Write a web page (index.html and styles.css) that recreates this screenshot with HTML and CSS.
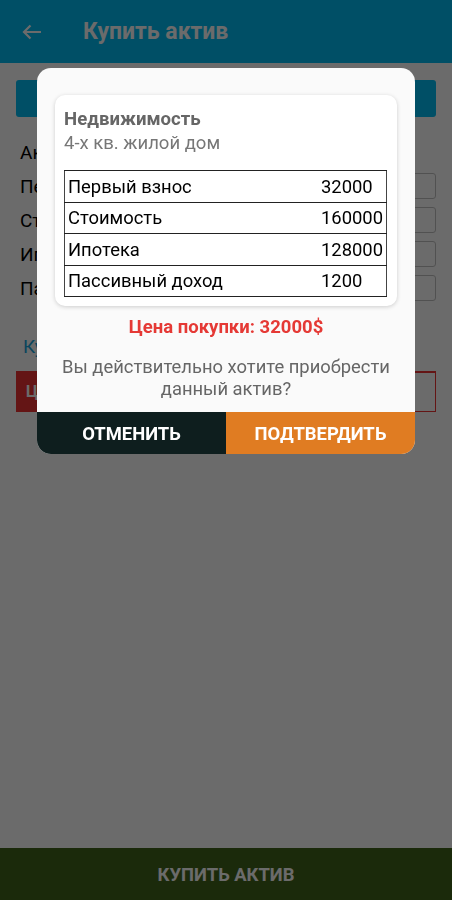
FILE: index.html
```html
<!DOCTYPE html>
<html lang="ru">

<head>
    <meta charset="UTF-8">
    <meta name="viewport" content="width=device-width, initial-scale=1.0">
    <title>Купить актив</title>
    <link rel="stylesheet" href="styles.css">
</head>

<body>
    <div class="page">
        <!-- верхняя панель -->
        <header class="topbar">
            <svg class="back" width="20" height="16" viewBox="0 0 20 16">
                <path d="M19 8H2M8.5 1.5L2 8l6.5 6.5" fill="none" stroke="#fff" stroke-width="2.2"/>
            </svg>
            <h1>Купить актив</h1>
        </header>

        <main class="content">
            <div class="pick">ВЫБРАТЬ АКТИВ</div>
            <div class="field"><span>Актив: Недвижимость</span></div>
            <div class="field"><span>Первый взнос</span><span class="box"></span></div>
            <div class="field"><span>Стоимость</span><span class="box"></span></div>
            <div class="field"><span>Ипотека</span><span class="box"></span></div>
            <div class="field"><span>Пассивный доход</span><span class="box"></span></div>
            <div class="link">Купить в кредит</div>
            <div class="price-row">
                <div class="price-tag">ЦЕНА</div>
                <div class="price-box"></div>
            </div>
        </main>

        <footer class="buy-bar">КУПИТЬ АКТИВ</footer>
    </div>

    <!-- диалог подтверждения -->
    <div class="overlay">
        <div class="dialog">
            <div class="card">
                <div class="card-title">Недвижимость</div>
                <div class="card-sub">4-х кв. жилой дом</div>
                <table class="info">
                    <tr>
                        <td>Первый взнос</td>
                        <td class="val">32000</td>
                    </tr>
                    <tr>
                        <td>Стоимость</td>
                        <td class="val">160000</td>
                    </tr>
                    <tr>
                        <td>Ипотека</td>
                        <td class="val">128000</td>
                    </tr>
                    <tr>
                        <td>Пассивный доход</td>
                        <td class="val">1200</td>
                    </tr>
                </table>
            </div>
            <div class="price">Цена покупки: 32000$</div>
            <div class="question">Вы действительно хотите приобрести данный актив?</div>
            <div class="actions">
                <button class="btn-cancel">ОТМЕНИТЬ</button>
                <button class="btn-ok">ПОДТВЕРДИТЬ</button>
            </div>
        </div>
    </div>
</body>

</html>
```

FILE: styles.css
```css
body {
    margin: 0;
    font-family: Roboto, "Noto Sans", sans-serif;
    background-color: #fff;
}

.page {
    display: flex;
    flex-direction: column;
    height: 100vh;
}

.topbar {
    height: 63px;
    background-color: #00bcf2;
    display: flex;
    align-items: center;
    padding-left: 22px;
    box-sizing: border-box;
}

.topbar .back {
    margin-right: 41px;
}

.topbar h1 {
    margin: 0;
    color: #fff;
    font-size: 23px;
    font-weight: bold;
}

.content {
    padding: 17px 16px 0 16px;
}

.pick {
    height: 37px;
    background-color: #00bcf2;
    border-radius: 3px;
    color: #fff;
    font-weight: bold;
    display: flex;
    align-items: center;
    justify-content: center;
    margin-bottom: 18px;
}

.field {
    height: 34px;
    display: flex;
    align-items: center;
    justify-content: space-between;
    padding-left: 4px;
    font-size: 19px;
    color: #000;
}

.box {
    width: 130px;
    height: 26px;
    border: 1px solid #c2c2c2;
    border-radius: 3px;
    box-sizing: border-box;
}

.link {
    margin-top: 30px;
    padding-left: 7px;
    font-size: 19px;
    color: #1aa6de;
}

.price-row {
    display: flex;
    gap: 10px;
    margin-top: 13px;
    height: 41px;
}

.price-tag {
    width: 190px;
    background-color: #ee3333;
    color: #fff;
    font-weight: bold;
    display: flex;
    align-items: center;
    padding-left: 10px;
}

.price-box {
    flex: 1;
    border: 1px solid #ee3333;
    border-top-width: 2px;
}

.buy-bar {
    margin-top: auto;
    height: 52px;
    background-color: #41651b;
    color: #fff;
    font-size: 18.4px;
    font-weight: bold;
    display: flex;
    align-items: center;
    justify-content: center;
}

/* затемнение и диалог */
.overlay {
    position: fixed;
    top: 0;
    left: 0;
    right: 0;
    bottom: 0;
    background-color: rgba(0, 0, 0, 0.58);
    display: flex;
    justify-content: center;
    align-items: flex-start;
    padding-top: 68px;
}

.dialog {
    width: 378px;
    background-color: #fafafa;
    border-radius: 14px;
    overflow: hidden;
    text-align: center;
}

.card {
    margin: 27px 18px 0 18px;
    background-color: #fff;
    border-radius: 10px;
    box-shadow: 0 1px 4px rgba(0, 0, 0, 0.18);
    padding: 12px 10px 9px 9px;
    text-align: left;
}

.card-title {
    font-size: 18.6px;
    font-weight: bold;
    color: #666;
    line-height: 24px;
}

.card-sub {
    font-size: 18.5px;
    color: #777;
    line-height: 24px;
}

.info {
    width: 100%;
    margin-top: 15px;
    border-collapse: collapse;
    border: 1px solid #444;
    font-size: 18.4px;
    color: #000;
}

.info td {
    height: 30.5px;
    padding: 0 0 0 3px;
    border-top: 1px solid #222;
    border-bottom: 1px solid #222;
}

.info td.val {
    width: 65px;
    padding-left: 0;
}

.price {
    margin-top: 10px;
    font-size: 18.5px;
    line-height: 22px;
    font-weight: bold;
    color: #e53935;
}

.question {
    margin: 18px 20px 12px 20px;
    font-size: 18.4px;
    line-height: 22px;
    color: #666;
}

.actions {
    display: flex;
}

.actions button {
    flex: 1;
    height: 42px;
    border: none;
    color: #fff;
    font-family: Roboto, "Noto Sans", sans-serif;
    font-size: 18.4px;
    font-weight: bold;
    cursor: pointer;
}

.btn-cancel {
    background-color: #0e1e1e;
}

.btn-ok {
    background-color: #e07c22;
}
```
